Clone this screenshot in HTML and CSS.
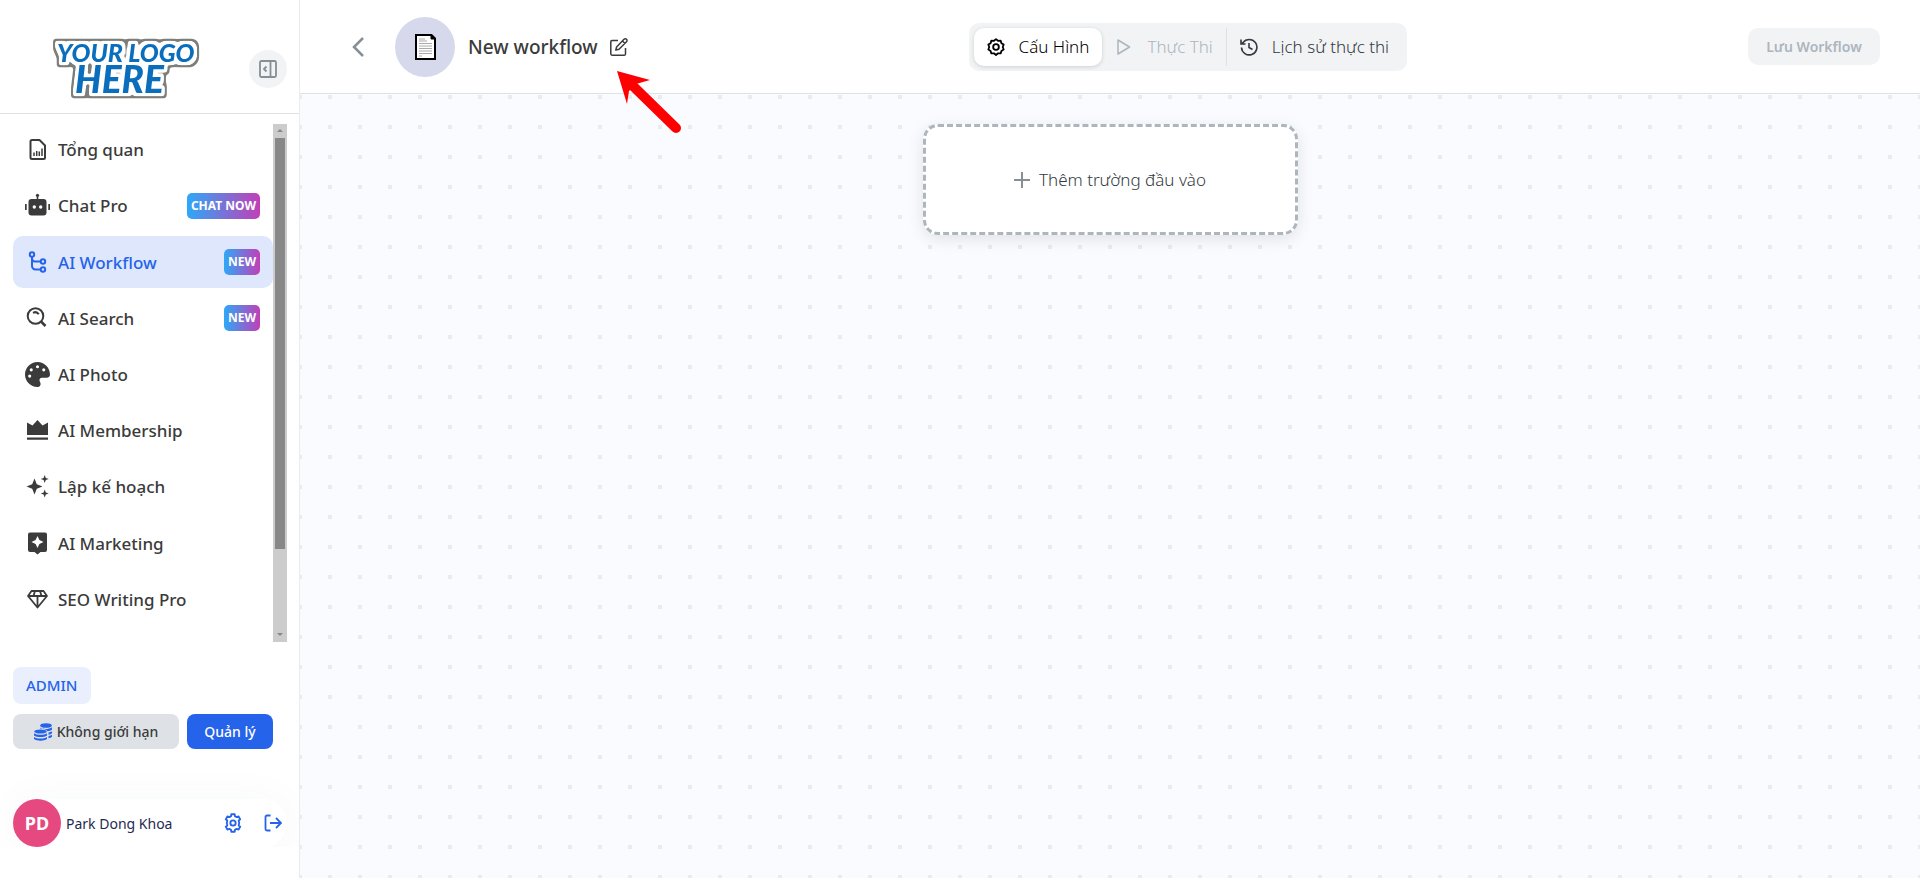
FILE: index.html
```html
<!DOCTYPE html>
<html lang="vi">
<head>
    <meta charset="UTF-8">
    <meta name="viewport" content="width=device-width, initial-scale=1.0">
    <title>New workflow</title>
    <link rel="stylesheet" href="styles.css">
</head>
<body>

    <!-- Sidebar -->
    <aside class="sidebar">
        <div class="sidebar-top">
            <a href="#" class="logo" aria-label="Home">
                <svg width="156" height="70" viewBox="0 0 156 70">
                    <!-- White outline with a grey edge, both grown from the letters -->
                    <filter id="outline" x="-20%" y="-30%" width="140%" height="160%" color-interpolation-filters="sRGB">
                        <feMorphology in="SourceAlpha" operator="dilate" radius="5" result="wide"/>
                        <feGaussianBlur in="wide" stdDeviation="1.5" result="wideSoft"/>
                        <feComponentTransfer in="wideSoft" result="wideShape"><feFuncA type="linear" slope="4" intercept="-1.2"/></feComponentTransfer>
                        <feFlood flood-color="#7d7d7a"/>
                        <feComposite in2="wideShape" operator="in" result="edge"/>
                        <feMorphology in="SourceAlpha" operator="dilate" radius="3" result="near"/>
                        <feGaussianBlur in="near" stdDeviation="1" result="nearSoft"/>
                        <feComponentTransfer in="nearSoft" result="nearShape"><feFuncA type="linear" slope="4" intercept="-1.2"/></feComponentTransfer>
                        <feFlood flood-color="#fff"/>
                        <feComposite in2="nearShape" operator="in" result="white"/>
                        <feMerge><feMergeNode in="edge"/><feMergeNode in="white"/><feMergeNode in="SourceGraphic"/></feMerge>
                    </filter>
                    <g class="logo-text" filter="url(#outline)">
                        <text x="10" y="29" class="logo-small">YOUR LOGO</text>
                        <text x="28" y="60" class="logo-big">HERE</text>
                    </g>
                </svg>
            </a>
            <button class="collapse" aria-label="Collapse">
                <svg width="18" height="18" viewBox="0 0 18 18" fill="none" stroke="currentColor" stroke-width="1.8" stroke-linejoin="round">
                    <rect x="1" y="1" width="16" height="16" rx="1.5"/>
                    <path d="M11.500 1v16M7.500 6.500L5 9l2.500 2.500"/>
                </svg>
            </button>
        </div>

        <div class="menu">
            <ul class="menu-list">
                <li><a href="#">
                    <svg class="icon" viewBox="0 0 25 25" fill="none" stroke="currentColor" stroke-width="2" stroke-linejoin="round"><path d="M7 3h7.500L20 8.500V20.500a1.500 1.500 0 0 1-1.500 1.500H7a1.500 1.500 0 0 1-1.500-1.500V4.500A1.500 1.500 0 0 1 7 3z"/><path d="M9 19v-3.500M11.700 19v-5M14.300 19v-4.500M17 19v-7.500" stroke-width="1.500"/></svg>
                    <span>Tổng quan</span></a></li>
                <li><a href="#">
                    <svg class="icon" viewBox="0 0 25 25" fill="currentColor"><path d="M11.700 6V3.800a1.600 1.600 0 1 1 1.600 0V6h5.200a3 3 0 0 1 3 3v10.500a3 3 0 0 1-3 3h-12a3 3 0 0 1-3-3V9a3 3 0 0 1 3-3zM0 11h1.700v6H0zM23.300 11H25v6h-1.700z"/><circle cx="9.300" cy="14" r="1.700" fill="#fff"/><circle cx="15.700" cy="14" r="1.700" fill="#fff"/></svg>
                    <span>Chat Pro</span><b class="badge">CHAT NOW</b></a></li>
                <li><a href="#" class="active">
                    <svg class="icon" viewBox="0 0 25 25" fill="none" stroke="currentColor" stroke-width="2"><circle cx="7" cy="4.500" r="2.200"/><circle cx="18" cy="11.500" r="2.200"/><circle cx="18" cy="19.500" r="2.200"/><path d="M7 7v9a3.500 3.500 0 0 0 3.500 3.500h5M7 8.500a3 3 0 0 0 3 3h5.500"/></svg>
                    <span>AI Workflow</span><b class="badge">NEW</b></a></li>
                <li><a href="#">
                    <svg class="icon" viewBox="0 0 25 25" fill="none" stroke="currentColor" stroke-width="2"><circle cx="10.500" cy="10" r="7.800"/><path d="M16 15.500l4.500 4.500" stroke-width="2.500"/><path d="M8 6.800c2-1 4.500-.5 5.800 1.500"/></svg>
                    <span>AI Search</span><b class="badge">NEW</b></a></li>
                <li><a href="#">
                    <svg class="icon" viewBox="0 0 512 512" fill="currentColor"><path d="M512 256c0 .9 0 1.800 0 2.700c-.4 36.500-33.600 61.300-70.100 61.300H344c-26.500 0-48 21.500-48 48c0 3.400 .4 6.700 1 9.900c2.100 10.200 6.500 20 10.800 29.900c6.100 13.800 12.100 27.500 12.100 42c0 31.800-21.600 60.700-53.400 62c-3.500 .1-7 .2-10.600 .2C114.600 512 0 397.400 0 256S114.600 0 256 0S512 114.600 512 256zM128 288a32 32 0 1 0-64 0 32 32 0 1 0 64 0zm0-96a32 32 0 1 0 0-64 32 32 0 1 0 0 64zM288 96a32 32 0 1 0-64 0 32 32 0 1 0 64 0zm96 96a32 32 0 1 0 0-64 32 32 0 1 0 0 64z"/></svg>
                    <span>AI Photo</span></a></li>
                <li><a href="#">
                    <svg class="icon" viewBox="0 0 25 25" fill="currentColor"><path d="M2 4.500l5.500 3L12.500 2l5 5.500 5.500-3V17H2zM2 19.500h21v2.200H2z"/></svg>
                    <span>AI Membership</span></a></li>
                <li><a href="#">
                    <svg class="icon" viewBox="0 0 25 25" fill="currentColor"><path d="M9.500 4.500l2.300 5.700 5.700 2.300-5.700 2.300-2.300 5.700-2.300-5.700-5.700-2.300 5.700-2.300zM19.700 1l1.100 2.900L23.700 5l-2.900 1.100L19.700 9l-1.100-2.900L15.700 5l2.900-1.100zM19.700 15.500l1.100 2.900 2.900 1.100-2.900 1.100-1.100 2.900-1.100-2.900-2.900-1.100 2.900-1.100z"/></svg>
                    <span>Lập kế hoạch</span></a></li>
                <li><a href="#">
                    <svg class="icon" viewBox="0 0 25 25" fill="currentColor"><path fill-rule="evenodd" d="M5 1.500h15a2 2 0 0 1 2 2V19a2 2 0 0 1-2 2h-4.500l-3 2.500-3-2.500H5a2 2 0 0 1-2-2V3.500a2 2 0 0 1 2-2zM12.500 5l-1.900 4.100L6.500 11l4.100 1.900L12.500 17l1.900-4.100L18.500 11l-4.100-1.900z"/></svg>
                    <span>AI Marketing</span></a></li>
                <li><a href="#">
                    <svg class="icon" viewBox="0 0 25 25" fill="none" stroke="currentColor" stroke-width="1.800" stroke-linejoin="round"><path d="M6.500 4h12L22 9l-9.500 11.500L3 9zM3 9h19M10 4L8.500 9M15 4l1.500 5M12.500 9v11"/></svg>
                    <span>SEO Writing Pro</span></a></li>
            </ul>
            <div class="scrollbar" aria-hidden="true">
                <i class="arrow-up"></i>
                <div class="track"><div class="thumb"></div></div>
                <i class="arrow-down"></i>
            </div>
        </div>

        <div class="account">
            <span class="role">ADMIN</span>
            <div class="plan">
                <button class="credits">
                    <svg width="18" height="18" viewBox="0 0 18 18" fill="currentColor"><ellipse cx="12" cy="2.500" rx="5.800" ry="2.300"/><path d="M6 4.500c3 2 9 2 12-.3v2.300c-1 1-2.700 1.500-4.500 1.700C12.500 6.500 9 5.500 6 5.600zM14.500 9.500c1.500-.2 2.700-.7 3.500-1.300v2c-.8.8-2 1.300-3.500 1.500zM14.500 13c1.500-.2 2.700-.7 3.500-1.300v2c-.8.800-2 1.300-3.500 1.500z"/><ellipse cx="6.500" cy="8.500" rx="6.300" ry="2"/><path d="M0 10.200c3 2 10 2 13 0v2.300c-3 2-10 2-13 0zM0 14c3 2 10 2 13 0v2c-3 2.300-10 2.300-13 0z"/></svg>
                    Không giới hạn
                </button>
                <button class="manage">Quản lý</button>
            </div>
            <div class="profile-wrap">
                <div class="profile">
                    <span class="avatar">PD</span>
                    <span class="name">Park Dong Khoa</span>
                    <button class="icon-btn" aria-label="Settings">
                        <svg width="20" height="20" viewBox="0 0 24 24" fill="none" stroke="currentColor" stroke-width="2.200" stroke-linejoin="round"><path d="M9.600 3.900L10 1.500h4l.4 2.400 2 1.100 2.300-.9 2 3.500-1.900 1.500a7 7 0 0 1 0 5.800l1.900 1.500-2 3.500-2.300-.9-2 1.100-.4 2.400h-4l-.4-2.400-2-1.100-2.300.9-2-3.500 1.900-1.500a7 7 0 0 1 0-5.800L3.300 7.600l2-3.500 2.300.9z"/><circle cx="12" cy="12" r="3.200"/></svg>
                    </button>
                    <button class="icon-btn" aria-label="Log out">
                        <svg width="18" height="18" viewBox="0 0 18 18" fill="none" stroke="currentColor" stroke-width="1.800"><path d="M6.500 1.500H3A1.500 1.500 0 0 0 1.500 3v12A1.500 1.500 0 0 0 3 16.500h3.500M6 9h11M12 4l5 5-5 5"/></svg>
                    </button>
                </div>
            </div>
        </div>
    </aside>

    <!-- Workflow editor -->
    <main class="editor">
        <header class="topbar">
            <div class="title-group">
                <button class="back" aria-label="Back">
                    <svg width="12" height="20" viewBox="0 0 12 20" fill="none" stroke="currentColor" stroke-width="2.500"><path d="M11 1L2 10l9 9"/></svg>
                </button>
                <div class="doc-icon">
                    <svg width="21" height="26" viewBox="0 0 21 26"><path d="M1 1h15.500L20 4.500V25H1z" fill="#fff" stroke="#000" stroke-width="2"/><path d="M16 1v4h4" fill="#000" stroke="#000"/><path d="M4 5h6M4 7h8M4 9.500h13M4 12h13M4 14.500h13M4 17h13M4 19.500h13M4 22h3" stroke="#aaa"/></svg>
                </div>
                <h1>New workflow</h1>
                <button class="edit" aria-label="Rename">
                    <svg width="18" height="18" viewBox="0 0 18 18" fill="none" stroke="currentColor" stroke-width="1.500" stroke-linejoin="round"><path d="M8 2.500H2A1.300 1.300 0 0 0 .8 3.800V16A1.300 1.300 0 0 0 2 17.200h12.200a1.300 1.300 0 0 0 1.300-1.200v-6"/><path d="M14 1.300a1.700 1.700 0 0 1 2.500 2.500L9 11.300l-3.200.8.800-3.200zM12.500 3l2.500 2.500"/></svg>
                </button>
                <!-- Hint pointing at the rename button -->
                <svg class="pointer" width="66" height="66" viewBox="0 0 66 66" aria-hidden="true"><path d="M18 17L60 58" stroke="#f00" stroke-width="10" stroke-linecap="round"/><path d="M1 1l33 9-14 4-7 7-2 13z" fill="#f00"/></svg>
            </div>

            <nav class="tabs">
                <button class="tab current">
                    <svg width="18" height="18" viewBox="0 0 24 24" fill="none" stroke="currentColor" stroke-width="2.400" stroke-linejoin="round"><path d="M12 1.500l2.700 2.200 3.500-.2 1 3.400 3 1.900L21 12l1.200 3.300-3 1.900-1 3.400-3.500-.2-2.700 2.200-2.700-2.200-3.500.2-1-3.400-3-1.900L3 12 1.800 8.800l3-1.900 1-3.400 3.500.2z"/><circle cx="12" cy="12" r="3.800"/></svg>
                    Cấu Hình
                </button>
                <button class="tab" disabled>
                    <svg width="18" height="18" viewBox="0 0 18 18" fill="none" stroke="currentColor" stroke-width="1.500" stroke-linejoin="round"><path d="M3 2l11.500 7L3 16z"/></svg>
                    Thực Thi
                </button>
                <button class="tab history">
                    <svg width="18" height="18" viewBox="0 0 18 18" fill="none" stroke="currentColor" stroke-width="1.600"><path d="M1.500 9.500A7.700 7.700 0 1 0 3 4.600L1.500 6M1 1.500V6h4.500M9 5v4.500l3.500 2"/></svg>
                    Lịch sử thực thi
                </button>
            </nav>

            <button class="save" disabled>Lưu Workflow</button>
        </header>

        <section class="canvas">
            <button class="add-input">
                <svg width="16" height="16" viewBox="0 0 16 16" stroke="#868e96" stroke-width="2"><path d="M8 0v16M0 8h16"/></svg>
                Thêm trường đầu vào
            </button>
        </section>
    </main>

</body>
</html>
```
FILE: styles.css
```css
/* Basic Reset */
* {
    margin: 0;
    padding: 0;
    box-sizing: border-box;
}

body {
    display: flex;
    min-height: 100vh;
    font-family: 'Noto Sans', 'Open Sans', sans-serif;
    font-size: 17px;
    color: #3b3b3b;
    background-color: #fff;
}

button {
    font: inherit;
    color: inherit;
    background: none;
    border: none;
    cursor: pointer;
    white-space: nowrap;
}

svg {
    display: block;
    flex-shrink: 0;
}

/* Sidebar */
.sidebar {
    width: 300px;
    flex-shrink: 0;
    display: flex;
    flex-direction: column;
    height: 100vh;
    padding-bottom: 31px;
    border-right: 1px solid #e9ecef;
}

.sidebar-top {
    display: flex;
    align-items: flex-end;
    justify-content: space-between;
    height: 114px;
    padding: 0 12px 10px 47px;
    border-bottom: 1px solid #dee2e6;
}

.logo-text {
    font-family: Lato, sans-serif;
    font-style: italic;
    font-weight: 900;
    fill: #0a6ebd;
}

.logo-small {
    font-size: 25px;
}

.logo-big {
    font-size: 37px;
}

.collapse {
    display: flex;
    align-items: center;
    justify-content: center;
    width: 38px;
    height: 38px;
    margin-bottom: 15px;
    border-radius: 50%;
    background-color: #f1f3f5;
    color: #868e96;
}

/* Menu */
.menu {
    flex: 1;
    min-height: 0;
    display: flex;
    padding: 10px 12px 0 13px;
}

.menu-list {
    flex: 1;
    display: grid;
    grid-auto-rows: 1fr;
    row-gap: 5px;
    padding-bottom: 17px;
    list-style: none;
}

.menu-list a {
    display: flex;
    align-items: center;
    gap: 8px;
    height: 100%;
    padding: 0 13px 0 12px;
    border-radius: 10px;
    color: inherit;
    font-weight: 500;
    text-decoration: none;
}

.menu-list a.active {
    background-color: #dfe7fd;
    color: #2563eb;
}

.icon {
    width: 25px;
    height: 25px;
}

.badge {
    margin-left: auto;
    padding: 0 4px;
    border-radius: 5px;
    background-image: linear-gradient(90deg, #2ea8f7, #c13fb8);
    color: #fff;
    font-size: 12px;
    font-weight: 700;
    line-height: 26px;
}

.scrollbar {
    display: flex;
    flex-direction: column;
    align-items: center;
    width: 14px;
    padding: 5px 0 6px;
    background-color: #ccc;
}

.arrow-up,
.arrow-down {
    border: 3px solid transparent;
}

.arrow-up {
    border-top-width: 0;
    border-bottom-color: #888;
}

.arrow-down {
    border-bottom-width: 0;
    border-top-color: #888;
}

.track {
    flex: 1;
    width: 10px;
    margin: 6px 0;
}

.thumb {
    height: 84%;
    background-color: #888;
}

/* Account */
.account {
    padding: 25px 0 0 13px;
    font-size: 14px;
}

.role {
    display: inline-block;
    padding: 0 13px;
    border-radius: 8px;
    background-color: #e9effd;
    color: #2563eb;
    font-size: 15px;
    font-weight: 500;
    line-height: 37px;
}

.plan {
    display: flex;
    gap: 8px;
    margin: 10px 26px 0 0;
}

.credits,
.manage {
    display: flex;
    align-items: center;
    justify-content: center;
    gap: 5px;
    height: 35px;
    border-radius: 8px;
}

.credits {
    flex: 1;
    background-color: #dee2e6;
    font-weight: 500;
}

.credits svg {
    color: #2563eb;
}

.manage {
    width: 86px;
    background-color: #2563eb;
    color: #fff;
    font-weight: 500;
}

/* Clips the glow of the profile pill at its bottom edge */
.profile-wrap {
    overflow: hidden;
    margin-left: -13px;
    padding: 50px 12px 0 13px;
}

.profile {
    display: flex;
    align-items: center;
    height: 48px;
    padding-right: 5px;
    border-radius: 24px;
    background-color: #fff;
    box-shadow: 0 0 40px rgba(60, 70, 90, 0.04);
}

.avatar {
    width: 48px;
    border-radius: 50%;
    background-color: #e64980;
    color: #fff;
    font-size: 18px;
    font-weight: 700;
    line-height: 48px;
    text-align: center;
}

.name {
    flex: 1;
    margin-left: 5px;
    color: #1f2a52;
}

.icon-btn {
    margin-left: 21px;
    color: #2563eb;
}

/* Top bar */
.editor {
    flex: 1;
    min-width: 0;
    display: flex;
    flex-direction: column;
}

.topbar {
    display: flex;
    align-items: center;
    justify-content: space-between;
    height: 94px;
    padding: 0 40px 0 52px;
    border-bottom: 1px solid #dee2e6;
}

.title-group {
    position: relative;
    display: flex;
    align-items: center;
}

.back {
    color: #868e96;
}

.doc-icon {
    display: flex;
    align-items: center;
    justify-content: center;
    width: 60px;
    height: 60px;
    margin: 0 13px 0 31px;
    border-radius: 50%;
    background-color: #d6d9ec;
}

h1 {
    font-size: 19px;
    font-weight: 500;
}

.edit {
    margin-left: 12px;
}

.pointer {
    position: absolute;
    top: 53px;
    right: -54px;
}

.tabs {
    display: flex;
    padding: 5px;
    border-radius: 10px;
    background-color: #f1f3f5;
}

.tab {
    display: flex;
    align-items: center;
    gap: 14px;
    height: 38px;
    padding: 0 13px;
    border-radius: 10px;
    color: #343a40;
    font-weight: 300;
}

.tab.current {
    background-color: #fff;
    color: #000;
    box-shadow: 0 1px 4px rgba(0, 0, 0, 0.15);
}

.tab:disabled {
    color: #adb5bd;
}

.tab.history {
    border-left: 1px solid #dee2e6;
    border-radius: 0;
}

.save {
    width: 132px;
    height: 37px;
    border-radius: 10px;
    background-color: #f1f3f5;
    color: #adb5bd;
    font-size: 14px;
    font-weight: 600;
}

/* Canvas */
.canvas {
    flex: 1;
    padding: 30px;
    background-color: #fafbff;
    /* 4px square dots, one every 30px */
    background-image: conic-gradient(from 270deg at 4px 4px, #e9ebef 90deg, transparent 0);
    background-size: 30px 30px;
    background-position: 28px 1px;
}

.add-input {
    display: flex;
    align-items: center;
    justify-content: center;
    gap: 9px;
    width: 375px;
    height: 111px;
    margin: 0 auto;
    border: 3px dashed #adb5bd;
    border-radius: 15px;
    background-color: #fff;
    color: #343a40;
    font-weight: 300;
    box-shadow: 0 4px 16px rgba(0, 0, 0, 0.1);
}
```
